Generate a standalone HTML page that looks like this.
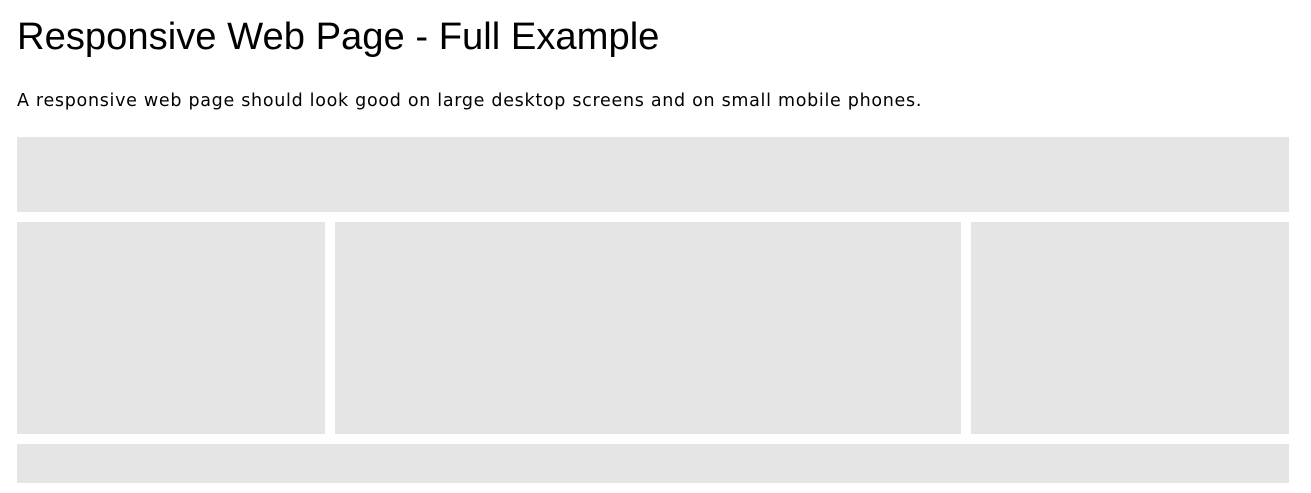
<!DOCTYPE html>
<html><head><meta charset="utf-8"><style>
html,body{margin:0;padding:0;background:#fff;width:1311px;height:493px;overflow:hidden}
h1{position:absolute;left:17px;top:15px;margin:0;font:38.2px/44px "Liberation Sans",sans-serif;color:#000;font-weight:normal;white-space:nowrap}
p{position:absolute;left:17px;top:90px;margin:0;font:17.5px/22px "DejaVu Sans",sans-serif;letter-spacing:0.7px;color:#000;white-space:nowrap}
.b{position:absolute;background:#e5e5e5}
</style></head><body>
<h1>Responsive Web Page - Full Example</h1>
<p>A responsive web page should look good on large desktop screens and on small mobile phones.</p>
<div class="b" style="left:17px;top:137px;width:1272px;height:75px"></div>
<div class="b" style="left:17px;top:222px;width:308px;height:212px"></div>
<div class="b" style="left:335px;top:222px;width:626px;height:212px"></div>
<div class="b" style="left:971px;top:222px;width:318px;height:212px"></div>
<div class="b" style="left:17px;top:444px;width:1272px;height:39px"></div>
</body></html>
